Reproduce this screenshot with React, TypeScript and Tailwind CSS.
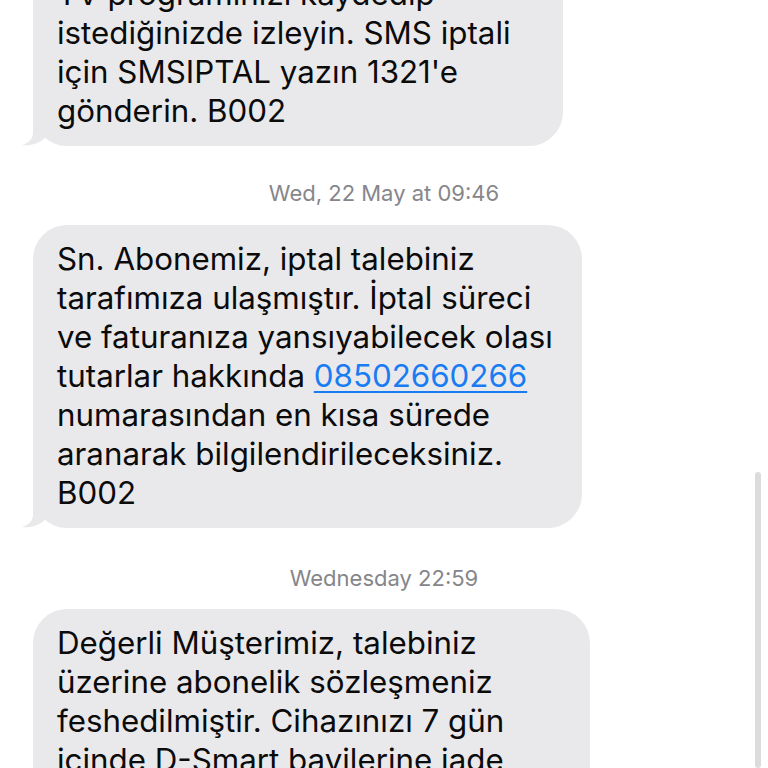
import React from "react";

function Tail() {
  return (
    <svg
      className="absolute left-[-12px] bottom-0"
      width="44"
      height="36"
      viewBox="0 0 44 36"
    >
      <path
        d="M12 0 L12 22 C12 29 8 33 1 35 C9 36.2 17 34 24 28 L30 20 L30 0 Z"
        fill="#e9e9eb"
      />
    </svg>
  );
}

function Bubble({
  lines,
  width,
}: {
  lines: React.ReactNode[];
  width: string;
}) {
  return (
    <div className={`relative ml-[33px] ${width}`}>
      <Tail />
      <div className="relative rounded-[34px] bg-[#e9e9eb] px-[24px] py-[15px] text-[31.3px] leading-[39px] text-[#0b0b0b]">
        {lines.map((l, i) => (
          <div key={i} className="whitespace-nowrap">
            {l}
          </div>
        ))}
      </div>
    </div>
  );
}

export default function App() {
  return (
    <div
      className="relative h-[768px] w-[768px] overflow-hidden bg-white"
      style={{ fontFamily: "Inter, 'Noto Sans', sans-serif" }}
    >
      <div className="mt-[-40px] flex flex-col">
        <Bubble
          width="w-[530px]"
          lines={[
            "TV programınızı kaydedip",
            "istediğinizde izleyin. SMS iptali",
            "için SMSIPTAL yazın 1321'e",
            "gönderin. B002",
          ]}
        />
        <div className="mt-[34px] mb-[19px] text-center text-[22px] leading-[26px] text-[#86868a]">
          Wed, 22 May at 09:46
        </div>
        <Bubble
          width="w-[549px]"
          lines={[
            "Sn. Abonemiz, iptal talebiniz",
            "tarafımıza ulaşmıştır. İptal süreci",
            "ve faturanıza yansıyabilecek olası",
            <>
              tutarlar hakkında{" "}
              <span className="text-[#1a7cf2] underline decoration-[2px] underline-offset-[4px]">
                08502660266
              </span>
            </>,
            "numarasından en kısa sürede",
            "aranarak bilgilendirileceksiniz.",
            "B002",
          ]}
        />
        <div className="mt-[37px] mb-[18px] text-center text-[22px] leading-[26px] text-[#86868a]">
          Wednesday 22:59
        </div>
        <Bubble
          width="w-[557px]"
          lines={[
            "Değerli Müşterimiz, talebiniz",
            "üzerine abonelik sözleşmeniz",
            "feshedilmiştir. Cihazınızı 7 gün",
            "içinde D-Smart bayilerine iade",
            "etmeniz gerekmektedir. B002",
          ]}
        />
      </div>
      <div className="absolute left-[755px] top-[472px] bottom-0 w-[6px] rounded-full bg-[#dcdcdc]" />
    </div>
  );
}
